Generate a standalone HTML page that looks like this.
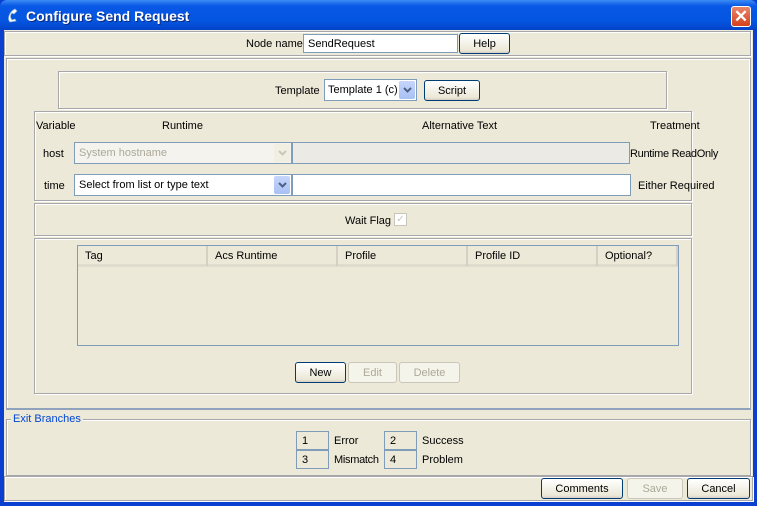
<!DOCTYPE html>
<html><head><style>
*{box-sizing:border-box;margin:0;padding:0}
body{width:757px;height:506px;overflow:hidden;background:#0a3fd0;font-family:"Liberation Sans",sans-serif;font-size:11px;color:#000;position:relative}
.a{position:absolute}
.title{left:0;top:0;width:757px;height:30px;background:linear-gradient(#3d8cf5,#0858e6 20%,#0455e0 70%,#0342c8);border-radius:7px 7px 0 0}
.title span{position:absolute;left:26px;top:8px;color:#fff;font-weight:bold;font-size:14px;text-shadow:1px 1px #0a2a80}
.frame{left:4px;top:30px;width:749px;height:472px;background:#ece9d8}
.p{position:absolute;border:1px solid #a7a6aa;box-shadow:inset 1px 1px #fff,1px 1px #fff}
.btn{position:absolute;border:1px solid #003c74;border-radius:3px;background:linear-gradient(#fff,#ece9d8 85%,#d6d0c5);text-align:center;line-height:20px;font-size:11px}
.dis{border-color:#c9c7ba;color:#aca899;background:#f5f4ea}
.in{position:absolute;border:1px solid #7f9db9;background:#fff;padding-left:4px;line-height:18px}
.dd{position:absolute;right:1px;top:1px;bottom:1px;width:16px;background:linear-gradient(#c6d6fb,#a8c0f4);border-radius:2px}
.dd svg{position:absolute;left:4px;top:6px}
.t{position:absolute;white-space:nowrap}
.th{position:absolute;top:0;height:20px;border-right:2px solid #d4d0c3;padding-left:7px;line-height:21px}
.box{position:absolute;width:33px;height:19px;border:1px solid #7f9db9;padding-left:5px;line-height:18px}
</style></head><body>
<div class="a title"><svg class="a" style="left:6px;top:8px" width="16" height="16"><path d="M4 14 C1 11 3 4 9 1 L11 3 L8 6 L6 5 C4 7 4 10 6 12 L9 11 L10 13 Z" fill="#fff" stroke="#9bc" stroke-width=".7"/></svg><span>Configure Send Request</span>
<div class="a" style="left:731px;top:6px;width:20px;height:21px;border:1px solid #fff;border-radius:3px;background:linear-gradient(#e8866a,#d4401b);color:#fff;font-size:17px;font-weight:bold;text-align:center;line-height:19px">✕</div></div>
<div class="a frame"></div>
<div class="p" style="left:4px;top:31px;width:747px;height:25px"></div>
<div class="t" style="left:246px;top:38px">Node name</div>
<div class="in" style="left:303px;top:34px;width:155px;height:19px">SendRequest</div>
<div class="btn" style="left:459px;top:33px;width:51px;height:21px">Help</div>
<div class="a" style="left:6px;top:58px;width:745px;height:352px;border:1px solid #a7a6aa;border-bottom:2px solid #8fa3bd;box-shadow:inset 1px 1px #fff,inset -1px 0 #fff"></div>
<div class="p" style="left:58px;top:71px;width:609px;height:38px"></div>
<div class="t" style="left:275px;top:85px">Template</div>
<div class="in" style="left:324px;top:79px;width:93px;height:22px;line-height:21px;padding-left:3px">Template 1 (c)<div class="dd"><svg width="9" height="7"><path d="M1 1 L4.5 4.5 L8 1" fill="none" stroke="#4d6185" stroke-width="2"/></svg></div></div>
<div class="btn" style="left:424px;top:80px;width:56px;height:21px">Script</div>
<div class="p" style="left:34px;top:111px;width:658px;height:90px"></div>
<div class="t" style="left:36px;top:120px">Variable</div>
<div class="t" style="left:162px;top:120px">Runtime</div>
<div class="t" style="left:422px;top:120px">Alternative Text</div>
<div class="t" style="left:650px;top:120px">Treatment</div>
<div class="t" style="left:43px;top:148px">host</div>
<div class="in" style="left:74px;top:142px;width:218px;height:22px;background:#f4f3ee;color:#aca899;line-height:21px">System hostname<div class="dd" style="background:#f1efe2"><svg width="9" height="7"><path d="M1 1 L4.5 4.5 L8 1" fill="none" stroke="#c9c7ba" stroke-width="2"/></svg></div></div>
<div class="in" style="left:292px;top:142px;width:338px;height:22px;background:#ebeae4"></div>
<div class="t" style="left:630px;top:148px;letter-spacing:-0.3px">Runtime ReadOnly</div>
<div class="t" style="left:44px;top:180px">time</div>
<div class="in" style="left:74px;top:174px;width:218px;height:22px;line-height:21px">Select from list or type text<div class="dd"><svg width="9" height="7"><path d="M1 1 L4.5 4.5 L8 1" fill="none" stroke="#4d6185" stroke-width="2"/></svg></div></div>
<div class="in" style="left:292px;top:174px;width:339px;height:22px"></div>
<div class="t" style="left:638px;top:180px">Either Required</div>
<div class="p" style="left:34px;top:203px;width:658px;height:33px"></div>
<div class="t" style="left:345px;top:215px">Wait Flag</div>
<div class="a" style="left:394px;top:213px;width:13px;height:13px;border:1px solid #c9c7ba;background:#fff;color:#c9c7ba;font-size:10px;line-height:11px;text-align:center">✓</div>
<div class="p" style="left:34px;top:238px;width:658px;height:156px"></div>
<div class="a" style="left:77px;top:245px;width:602px;height:101px;border:1px solid #7f9db9;background:#ece9d8">
<div class="a" style="left:0;top:0;width:600px;height:21px;border-bottom:3px solid #e0dccd"></div>
<div class="th" style="left:0;width:130px">Tag</div>
<div class="th" style="left:130px;width:130px">Acs Runtime</div>
<div class="th" style="left:260px;width:130px">Profile</div>
<div class="th" style="left:390px;width:130px">Profile ID</div>
<div class="th" style="left:520px;width:80px">Optional?</div>
</div>
<div class="btn" style="left:295px;top:362px;width:51px;height:21px">New</div>
<div class="btn dis" style="left:348px;top:362px;width:49px;height:21px">Edit</div>
<div class="btn dis" style="left:399px;top:362px;width:61px;height:21px">Delete</div>
<div class="p" style="left:6px;top:419px;width:745px;height:57px"></div>
<div class="t" style="left:11px;top:413px;background:#ece9d8;color:#0046d5;padding:0 2px">Exit Branches</div>
<div class="box" style="left:296px;top:431px">1</div><div class="t" style="left:334px;top:435px">Error</div>
<div class="box" style="left:384px;top:431px">2</div><div class="t" style="left:422px;top:435px">Success</div>
<div class="box" style="left:296px;top:450px">3</div><div class="t" style="left:334px;top:454px;letter-spacing:-0.3px">Mismatch</div>
<div class="box" style="left:384px;top:450px">4</div><div class="t" style="left:422px;top:454px">Problem</div>
<div class="p" style="left:4px;top:476px;width:749px;height:25px"></div>
<div class="btn" style="left:541px;top:478px;width:82px;height:21px">Comments</div>
<div class="btn dis" style="left:627px;top:478px;width:56px;height:21px">Save</div>
<div class="btn" style="left:687px;top:478px;width:63px;height:21px">Cancel</div>
</body></html>
